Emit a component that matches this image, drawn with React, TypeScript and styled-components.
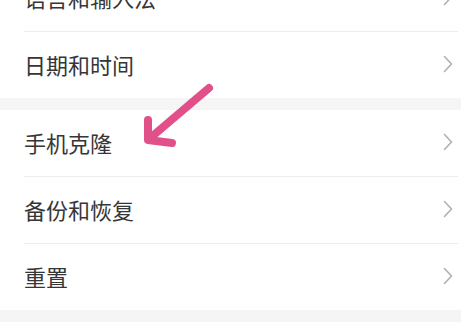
import React from 'react';
import styled, { createGlobalStyle } from 'styled-components';

const GlobalStyle = createGlobalStyle`
  html, body {
    margin: 0;
    background: #ffffff;
  }
  body {
    font-family: "Noto Sans CJK SC", "Noto Sans", sans-serif;
    overflow: hidden;
  }
`;

const Screen = styled.div`
  position: relative;
  width: 461px;
  height: 334px;
  overflow: hidden;
  background: #ffffff;
`;

const List = styled.div`
  display: flex;
  flex-direction: column;
  margin-top: -35px;
`;

const Group = styled.div`
  display: flex;
  flex-direction: column;
  background: #ffffff;
`;

const Band = styled.div`
  height: 12px;
  background: #f5f5f5;
`;

const Row = styled.div`
  display: flex;
  align-items: center;
  justify-content: space-between;
  box-sizing: border-box;
  height: 66px;
  padding: 0 8px 3px 24px;
`;

const Divider = styled.div`
  height: 1px;
  margin: 0 3px 0 24px;
  background: #ececec;
`;

const Label = styled.span`
  font-size: 22px;
  color: #363636;
  line-height: 1;
`;

const Chevron = () => (
  <svg width="10" height="18" viewBox="0 0 10 18">
    <path d="M1.5 1.5 L8.5 9 L1.5 16.5" fill="none" stroke="#b0b0b0" strokeWidth="1.6" strokeLinecap="round" strokeLinejoin="round" />
  </svg>
);

const ArrowMark = styled.svg`
  position: absolute;
  left: 0;
  top: 0;
  pointer-events: none;
`;

const groups = [
  ['语言和输入法', '日期和时间'],
  ['手机克隆', '备份和恢复', '重置'],
  ['']
];

export default function App() {
  return (
    <>
      <GlobalStyle />
      <Screen>
        <List>
          {groups.map((items, gi) => (
            <React.Fragment key={gi}>
              {gi > 0 && <Band />}
              <Group>
                {items.map((item, i) => (
                  <React.Fragment key={item + i}>
                    {i > 0 && <Divider />}
                    <Row>
                      <Label>{item}</Label>
                      {item && <Chevron />}
                    </Row>
                  </React.Fragment>
                ))}
              </Group>
            </React.Fragment>
          ))}
        </List>
        <ArrowMark width="461" height="334" viewBox="0 0 461 334">
          <g fill="none" stroke="#e2508a" strokeWidth="8" strokeLinecap="round" strokeLinejoin="round">
            <path d="M209 88 L149 139" />
            <path d="M148 120 L148 140 L172 143" />
          </g>
        </ArrowMark>
      </Screen>
    </>
  );
}
